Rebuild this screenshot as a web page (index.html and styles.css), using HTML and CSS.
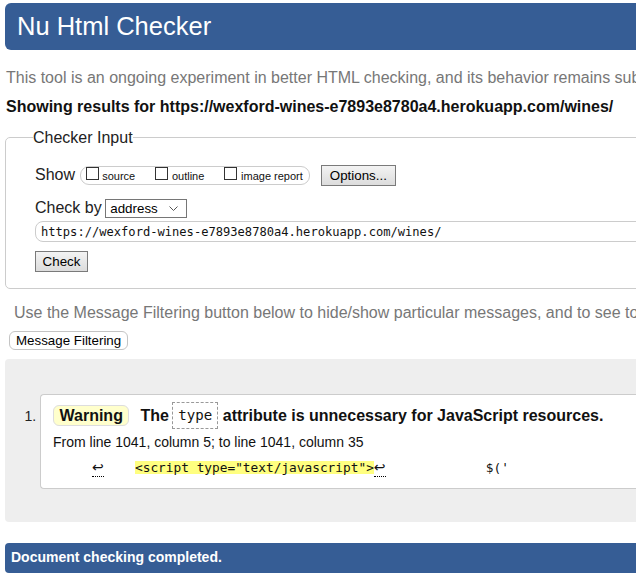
FILE: index.html
```html
<!DOCTYPE html>
<html lang="en">
<head>
<meta charset="utf-8">
<title>Showing results for https://wexford-wines-e7893e8780a4.herokuapp.com/wines/ - Nu Html Checker</title>
<link rel="stylesheet" href="styles.css">
</head>
<body>
<div class="page">
  <h1 class="hdr">Nu Html Checker</h1>
  <p class="intro">This tool is an ongoing experiment in better HTML checking, and its behavior remains subject to change</p>
  <p class="showing">Showing results for https://wexford-wines-e7893e8780a4.herokuapp.com/wines/</p>

  <fieldset class="input-box">
    <legend class="legend">Checker Input</legend>
    <div class="row row-show">
      <span class="lbl">Show</span>
      <span class="opts">
        <input type="checkbox" class="cb"><span class="cb-lbl">source</span>
        <input type="checkbox" class="cb gap"><span class="cb-lbl">outline</span>
        <input type="checkbox" class="cb gap"><span class="cb-lbl">image report</span>
      </span>
      <button class="btn btn-opt" type="button">Options...</button>
    </div>
    <div class="row row-by">
      <span class="lbl">Check by</span>
      <span class="sel-wrap">
        <select class="sel"><option>address</option></select>
        <svg class="chev" width="9" height="5" viewBox="0 0 9 5"><path d="M0.5 0.5 L4.5 4.5 L8.5 0.5" fill="none" stroke="#555" stroke-width="1"/></svg>
      </span>
    </div>
    <input class="url" type="text" value="https://wexford-wines-e7893e8780a4.herokuapp.com/wines/">
    <button class="btn btn-check" type="button">Check</button>
  </fieldset>

  <p class="filter-note">Use the Message Filtering button below to hide/show particular messages, and to see total counts of errors and warnings.</p>
  <button class="btn-filter" type="button">Message Filtering</button>

  <div class="results">
    <ol class="msgs">
      <li class="msg">
        <div class="msg-head">
          <span class="badge">Warning</span>
          <span class="the">The</span>
          <code class="attr">type</code>
          <span class="rest">attribute is unnecessary for JavaScript resources.</span>
        </div>
        <p class="loc">From line 1041, column 5; to line 1041, column 35</p>
        <div class="extract">
          <span class="lf lf1">↩</span>
          <span class="hl">&lt;script type="text/javascript"&gt;</span>
          <span class="lf">↩</span>
          <span class="tail">$('</span>
        </div>
      </li>
    </ol>
  </div>

  <p class="status">Document checking completed.</p>
</div>
</body>
</html>
```

FILE: styles.css
```css
html, body {
  margin: 0;
  padding: 0;
  overflow: hidden;
  background: #fff;
}

body {
  font-family: "Liberation Sans", Arial, sans-serif;
  color: #000;
}

.page {
  width: 900px;
  padding-left: 5px;
  padding-top: 3px;
}

.hdr {
  margin: 0;
  height: 47px;
  line-height: 47px;
  padding-left: 12px;
  background: #365d95;
  color: #fff;
  font-size: 25.5px;
  font-weight: normal;
  border-radius: 6px;
}

.intro {
  margin: 18.7px 0 0 1px;
  font-size: 16px;
  line-height: 18px;
  color: #777;
  white-space: nowrap;
}

.showing {
  margin: 11px 0 0 1px;
  font-size: 16px;
  line-height: 18px;
  font-weight: bold;
  color: #111;
  white-space: nowrap;
}

.input-box {
  margin: 13.3px 0 0 0;
  border: 1px solid #ccc;
  border-radius: 5px;
  padding: 0 0 16px 29px;
  min-width: 0;
}

.legend {
  margin-left: -2px;
  padding: 0;
  font-size: 16px;
  line-height: 18px;
  color: #222;
}

.row {
  display: flex;
  align-items: center;
}

.row-show {
  margin-top: 18px;
  height: 21px;
}

.lbl {
  font-size: 16px;
  line-height: 18px;
  color: #222;
}

.opts {
  display: flex;
  align-items: flex-start;
  height: 17px;
  margin-left: 4.5px;
  padding: 0 6px 0 5px;
  border: 1px solid #ccc;
  border-radius: 9px;
}

.cb {
  appearance: none;
  -webkit-appearance: none;
  width: 13px;
  height: 13px;
  margin: 0;
  border: 1px solid #333;
  background: #fff;
  border-radius: 0;
}

.cb.gap {
  margin-left: 20px;
}

.cb-lbl {
  margin: 3px 0 0 3.7px;
  font-size: 11px;
  line-height: 13px;
  color: #111;
}

.btn {
  font-family: "Liberation Sans", Arial, sans-serif;
  font-size: 13.33px;
  color: #000;
  background: linear-gradient(#f3f3f3, #dcdcdc);
  border: 1px solid #7a7a7a;
  border-radius: 0;
  line-height: 17px;
  margin: 0;
}

.btn-opt {
  margin-left: 11px;
  height: 21px;
  width: 75px;
  padding: 0 8px;
}

.row-by {
  margin-top: 13px;
  height: 19px;
}

.sel-wrap {
  position: relative;
  margin-left: 3.6px;
  display: inline-block;
  height: 19px;
}

.sel {
  appearance: none;
  -webkit-appearance: none;
  width: 82px;
  height: 19px;
  margin: 0;
  padding: 0 0 0 4px;
  border: 1px solid #767676;
  border-radius: 0;
  background: #fff;
  font-family: "Liberation Sans", Arial, sans-serif;
  font-size: 13.33px;
  color: #000;
  line-height: 17px;
}

.chev {
  position: absolute;
  right: 9px;
  top: 7px;
  pointer-events: none;
}

.url {
  display: block;
  box-sizing: border-box;
  margin: 3.5px 0 0 0;
  width: 880px;
  height: 21px;
  padding: 0 0 0 5px;
  border: 1px solid #ccc;
  border-radius: 8px;
  font-family: "DejaVu Sans Mono", "Liberation Mono", monospace;
  font-size: 12.1px;
  color: #111;
  background: #fff;
  outline: none;
}

.btn-check {
  display: block;
  margin-top: 8.5px;
  height: 21px;
  width: 53px;
  padding: 0;
}

.filter-note {
  margin: 15px 0 0 9px;
  font-size: 16px;
  line-height: 18px;
  color: #777;
  white-space: nowrap;
}

.btn-filter {
  display: block;
  margin: 9px 0 0 4px;
  height: 19px;
  padding: 0 6px;
  background: #fff;
  border: 1px solid #c4c4c4;
  border-radius: 6px;
  font-family: "Liberation Sans", Arial, sans-serif;
  font-size: 13.33px;
  line-height: 17px;
  color: #000;
}

.results {
  margin-top: 9px;
  background: #eee;
  border-radius: 4px;
  padding: 35px 0 33px 0;
}

.msgs {
  margin: 0;
  padding-left: 35px;
  font-size: 14px;
}

.msg {
  background: #fff;
  border: 1px solid #ccc;
  border-right: none;
  border-radius: 4px 0 0 4px;
  padding: 7.5px 0 11px 12px;
}

.msg::marker {
  font-size: 14px;
  color: #222;
}

.msg-head {
  display: flex;
  align-items: center;
  height: 27px;
  font-size: 16px;
  line-height: 18px;
  font-weight: bold;
  color: #111;
  white-space: nowrap;
}

.badge {
  height: 19px;
  line-height: 19px;
  padding: 0 5.5px;
  background: #ffc;
  border: 1px solid #ddd;
  border-radius: 6px;
}

.the {
  margin-left: 11px;
}

.attr {
  margin: 0 4.5px 0 3.5px;
  height: 25px;
  line-height: 25px;
  padding: 0 5px;
  border: 1px dashed #999;
  font-family: "DejaVu Sans Mono", "Liberation Mono", monospace;
  font-size: 14.1px;
  font-weight: normal;
  color: #111;
}

.loc {
  margin: 4.7px 0 0 0;
  font-size: 14px;
  line-height: 16px;
  color: #111;
  white-space: nowrap;
}

.extract {
  display: flex;
  align-items: baseline;
  margin-top: 10px;
  white-space: nowrap;
}

.lf {
  display: inline-block;
  font-family: "DejaVu Sans", sans-serif;
  font-size: 14px;
  line-height: 14px;
  height: 17px;
  width: 12px;
  box-sizing: border-box;
  border-bottom: 1px dotted #000;
  color: #111;
}

.lf1 {
  margin-left: 39px;
}

.hl {
  display: inline-block;
  margin-left: 31px;
  height: 13px;
  line-height: 13px;
  background: #ffff80;
  font-family: "DejaVu Sans Mono", "Liberation Mono", monospace;
  font-size: 12.8px;
  color: #111;
}

.tail {
  margin-left: 100px;
  font-family: "DejaVu Sans Mono", "Liberation Mono", monospace;
  font-size: 12.8px;
  color: #111;
}

.status {
  margin: 21px 0 0 0;
  height: 30px;
  padding: 6.3px 0 0 6px;
  box-sizing: border-box;
  background: #365d95;
  border-radius: 4px;
  color: #fff;
  font-size: 14px;
  line-height: 16px;
  font-weight: bold;
}
```
